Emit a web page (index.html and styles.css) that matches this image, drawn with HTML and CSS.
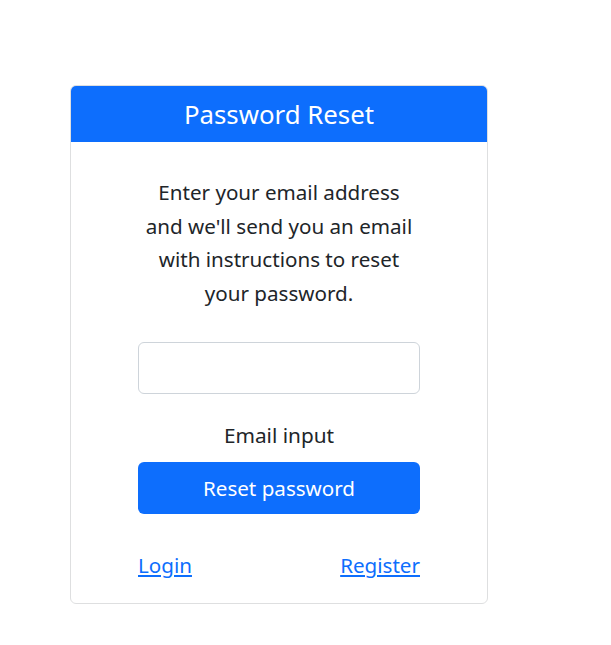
FILE: index.html
```html
<!DOCTYPE html>
<html>
<head>
<meta charset="utf-8">
<link rel="stylesheet" href="styles.css">
</head>
<body>
<div class="page">
  <div class="card">
    <div class="card-header">Password Reset</div>
    <div class="card-body">
      <p class="intro">Enter your email address and we'll send you an email with instructions to reset your password.</p>
      <input class="email" type="email">
      <div class="label">Email input</div>
      <button class="btn">Reset password</button>
      <div class="links">
        <a href="#">Login</a>
        <a href="#">Register</a>
      </div>
    </div>
  </div>
</div>
</body>
</html>
```

FILE: styles.css
```css
html, body {
  margin: 0;
  padding: 0;
  background: #fff;
}
body {
  font-family: "Noto Sans", "Open Sans", sans-serif;
  color: #212529;
}
.page {
  padding: 85px 0 0 70px;
}
.card {
  width: 416px;
  border: 1px solid #dedfe0;
  border-radius: 6px;
  overflow: hidden;
}
.card-header {
  background: #0d6efd;
  color: #fff;
  height: 57px;
  display: flex;
  align-items: center;
  justify-content: center;
  font-size: 25.8px;
  margin: -1px -1px 0 -1px;
}
.card-body {
  padding: 34px 67px 23px;
  display: flex;
  flex-direction: column;
}
.intro {
  margin: 0 auto;
  width: 282px;
  text-align: center;
  font-size: 20.6px;
  line-height: 33.5px;
}
.email {
  margin-top: 32px;
  height: 52px;
  box-sizing: border-box;
  border: 1px solid #ced4da;
  border-radius: 6px;
  font-size: 20px;
  padding: 0 12px;
}
.label {
  margin-top: 26px;
  text-align: center;
  font-size: 20.8px;
  line-height: 30px;
}
.btn {
  margin-top: 12px;
  height: 52px;
  border: none;
  border-radius: 6px;
  background: #0d6efd;
  color: #fff;
  font-family: inherit;
  font-size: 20.6px;
}
.links {
  margin-top: 36px;
  display: flex;
  justify-content: space-between;
  font-size: 20.6px;
  line-height: 30px;
}
.links a {
  color: #0d6efd;
  text-decoration: underline;
}
```
